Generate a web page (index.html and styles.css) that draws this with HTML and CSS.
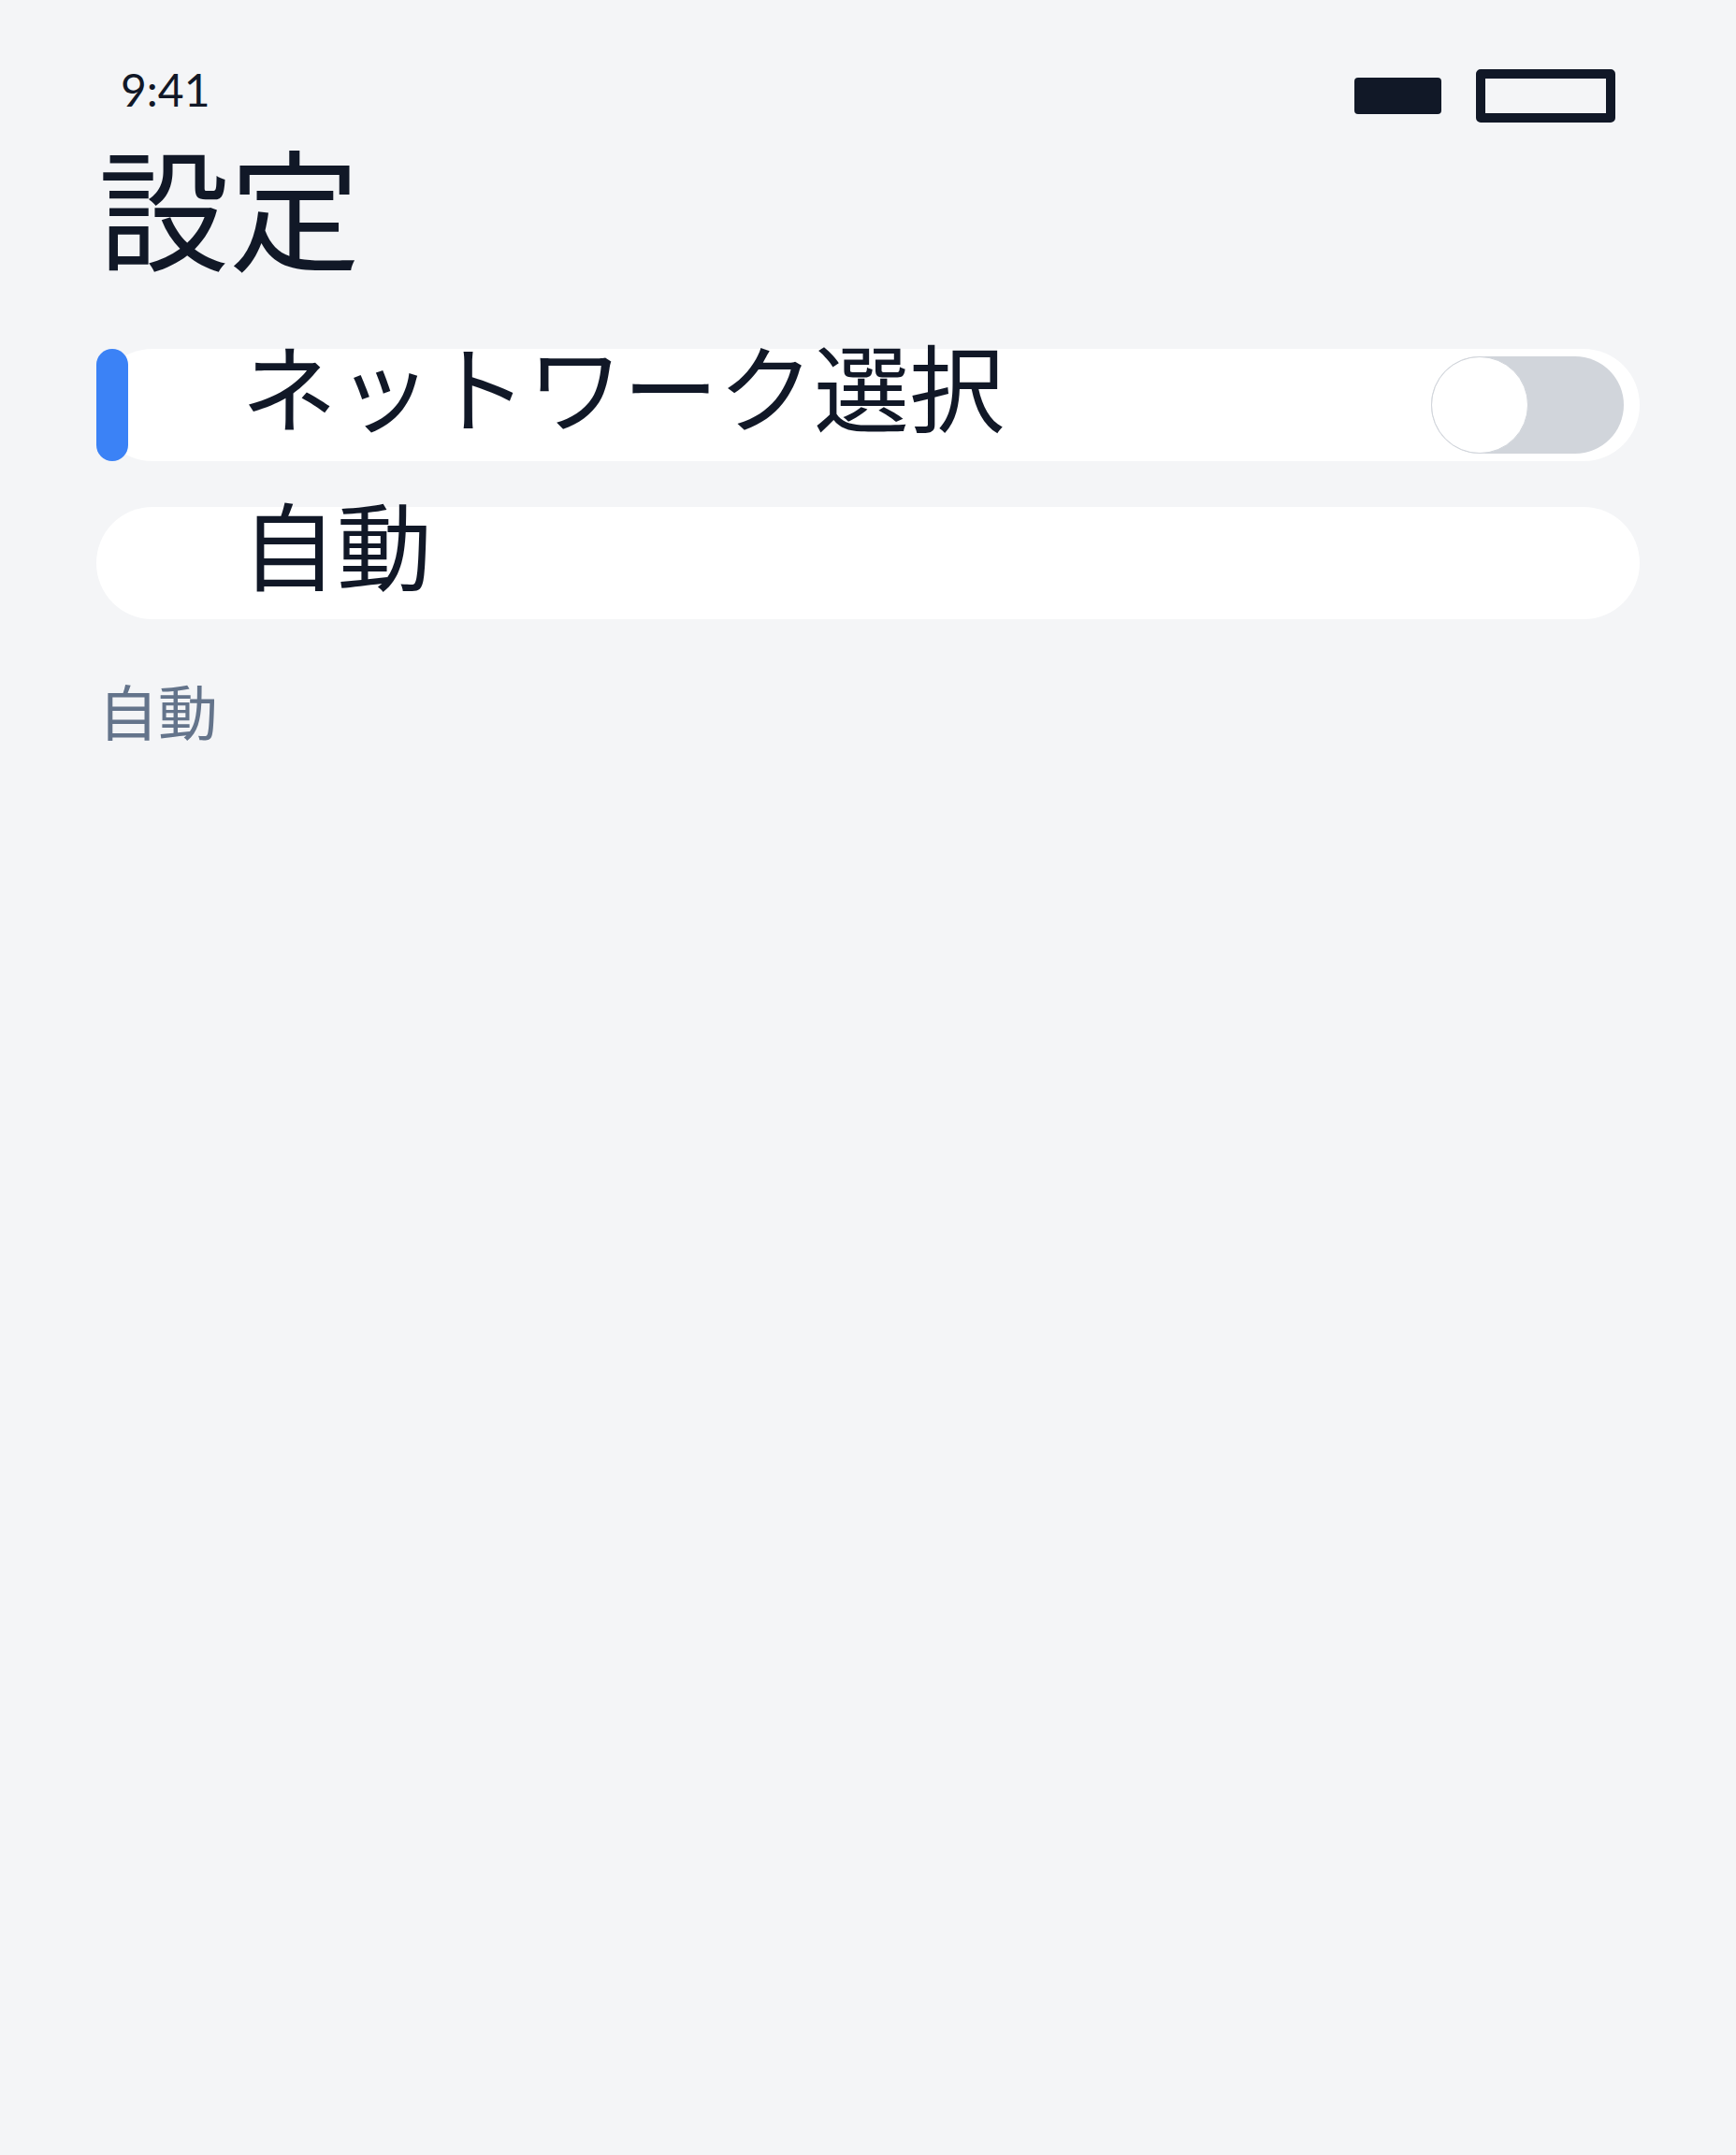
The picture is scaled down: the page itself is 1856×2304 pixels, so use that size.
FILE: index.html
```html
<!DOCTYPE html>
<html lang="ja">
<head>
    <meta charset="UTF-8">
    <meta name="viewport" content="width=device-width, initial-scale=1.0">
    <title>設定</title>
    <link rel="stylesheet" href="styles.css">
</head>
<body>
    <div class="screen">
        <div class="status-bar">
            <span class="time">9:41</span>
            <div class="status-icons">
                <span class="signal"></span>
                <span class="battery"></span>
            </div>
        </div>

        <div class="content">
            <h1 class="title">設定</h1>

            <div class="settings-list">
                <div class="setting-row selected">
                    <span class="row-label">ネットワーク選択</span>
                    <div class="toggle">
                        <span class="knob"></span>
                    </div>
                </div>
                <div class="setting-row">
                    <span class="row-label">自動</span>
                </div>
            </div>

            <div class="hint">自動</div>
        </div>
    </div>
</body>
</html>
```

FILE: styles.css
```css
body {
    margin: 0;
    background-color: #f4f5f7;
    color: #111827;
    font-family: "Noto Sans CJK JP", "Noto Sans", sans-serif;
}

.screen {
    min-height: 100vh;
}

.status-bar {
    display: flex;
    justify-content: space-between;
    align-items: flex-start;
    height: 132px;
    padding: 72px 129px 0;
    box-sizing: border-box;
}

.time {
    font-family: "Lato", "Noto Sans", sans-serif;
    font-size: 48px;
    line-height: 48px;
}

.status-icons {
    display: flex;
    align-items: center;
    gap: 37px;
    margin-top: 2px;
}

.signal {
    width: 93px;
    height: 39px;
    background-color: #111827;
    border-radius: 4px;
}

.battery {
    width: 149px;
    height: 57px;
    border: 10px solid #111827;
    border-radius: 5px;
    box-sizing: border-box;
}

.content {
    padding: 0 103px;
}

.title {
    margin: 16px 0 0;
    padding-left: 2px;
    font-size: 140px;
    font-weight: 400;
    line-height: 1;
}

.settings-list {
    display: flex;
    flex-direction: column;
    gap: 49px;
    margin-top: 85px;
}

.setting-row {
    position: relative;
    display: flex;
    justify-content: space-between;
    align-items: center;
    height: 120px;
    padding: 0 17px 0 155px;
    box-sizing: border-box;
    background-color: #fff;
    border-radius: 60px;
}

/* blue marker on the active row */
.setting-row.selected::before {
    content: "";
    position: absolute;
    left: 0;
    top: 0;
    bottom: 0;
    width: 34px;
    border-radius: 17px;
    background-color: #3b82f6;
}

.row-label {
    font-size: 102px;
    line-height: 1;
    padding-bottom: 44px;
}

.toggle {
    display: flex;
    width: 206px;
    height: 104px;
    border-radius: 52px;
    background-color: #d1d5db;
}

.knob {
    width: 104px;
    height: 104px;
    border: 1px solid #d1d5db;
    border-radius: 50%;
    background-color: #fff;
    box-sizing: border-box;
}

.hint {
    margin-top: 48px;
    padding-left: 2px;
    font-size: 64px;
    line-height: 96px;
    color: #64748b;
}
```
